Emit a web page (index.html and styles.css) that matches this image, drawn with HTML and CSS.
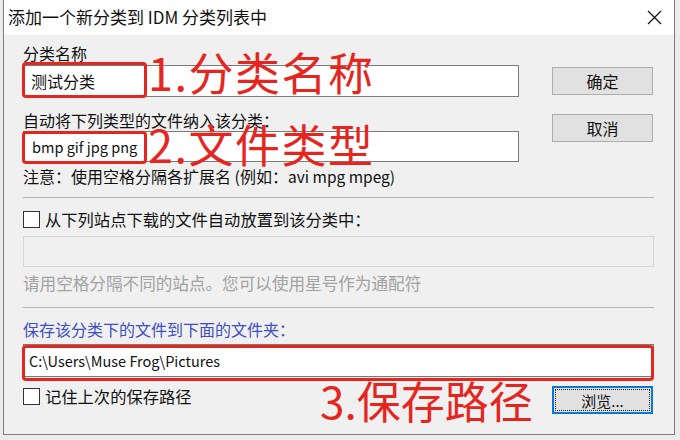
FILE: index.html
```html
<!DOCTYPE html>
<html lang="zh-CN">
<head>
<meta charset="utf-8">
<title>添加一个新分类到 IDM 分类列表中</title>
<link rel="stylesheet" href="styles.css">
</head>
<body>
<div class="screen">
  <div class="window">
    <div class="titlebar">
      <span class="title">添加一个新分类到 IDM 分类列表中</span>
      <svg class="close" width="15" height="15" viewBox="0 0 15 15"><path d="M1 1L14 14M14 1L1 14" stroke="#111" stroke-width="1.2" fill="none"/></svg>
    </div>
    <div class="body">
      <div class="top">
        <div class="fields">
          <div class="label l1">分类名称</div>
          <div class="input i1">测试分类</div>
          <div class="label l2">自动将下列类型的文件纳入该分类：</div>
          <div class="input i2">bmp gif jpg png</div>
          <div class="note">注意：使用空格分隔各扩展名 (例如：<span class="latin">avi mpg mpeg)</span></div>
        </div>
        <div class="buttons">
          <div class="btn">确定</div>
          <div class="btn cancel">取消</div>
        </div>
      </div>
      <div class="sep s1"></div>
      <div class="check c1"><span class="box"></span>从下列站点下载的文件自动放置到该分类中：</div>
      <div class="input disabled"></div>
      <div class="hint">请用空格分隔不同的站点。您可以使用星号作为通配符</div>
      <div class="sep s2"></div>
      <div class="label blue">保存该分类下的文件到下面的文件夹：</div>
      <div class="input path">C:\Users\Muse Frog\Pictures</div>
      <div class="bottom">
        <div class="check c2"><span class="box"></span>记住上次的保存路径</div>
        <div class="btn focus"><span class="focus-ring">浏览...</span></div>
      </div>
    </div>
    <div class="mark m1"></div>
    <div class="mark m2"></div>
    <div class="mark m3"></div>
    <div class="note-red r1">1.分类名称</div>
    <div class="note-red r2">2.文件类型</div>
    <div class="note-red r3">3.保存路径</div>
  </div>
</div>
</body>
</html>
```
FILE: styles.css
```css
* { box-sizing: border-box; }
html, body { margin: 0; padding: 0; }
body {
  font-family: "Noto Sans CJK SC", "Noto Sans", sans-serif;
  color: #111;
  background: #ececec;
}
.screen {
  width: 680px;
  height: 440px;
  padding-left: 3px;
  background: #ececec;
  overflow: hidden;
}
.window {
  position: relative;
  width: 672px;
  height: 435px;
  background: #f0f0f0;
  border-left: 1px solid #7d7d7d;
  border-right: 1px solid #7d7d7d;
  border-bottom: 1px solid #7d7d7d;
}
.titlebar {
  height: 35px;
  background: #fff;
  display: flex;
  align-items: center;
  justify-content: space-between;
  padding: 0 12px 2px 4px;
}
.title {
  font-size: 17px;
  line-height: 20px;
  color: #111;
}
.close { display: block; margin-top: 2px; }
.body {
  padding: 8px 20px 0 19px;
}
.top {
  display: flex;
  justify-content: space-between;
}
.fields { width: 496px; }
.label {
  font-size: 16px;
  line-height: 20px;
  height: 20px;
  white-space: nowrap;
}
.input {
  background: #fff;
  border: 1px solid #7a7a7a;
  display: flex;
  align-items: center;
  padding: 0 7px;
  font-size: 15px;
  white-space: nowrap;
}
.i1 { margin-top: 2px; height: 32px; font-size: 16px; }
.l2 {
  margin-top: 15px;
  line-height: 16px;
  height: 16px;
  margin-bottom: 2px;
}
.i2 { margin-top: 3px; height: 31px; padding-left: 8px; font-size: 14.5px; }
.note {
  margin-top: 4px;
  font-size: 16px;
  line-height: 20px;
  height: 20px;
  white-space: nowrap;
}
.latin { font-size: 15.5px; }
.buttons {
  width: 101px;
  margin-right: 1px;
  padding-top: 24px;
}
.btn {
  width: 101px;
  height: 28px;
  background: #e1e1e1;
  border: 1px solid #adadad;
  display: flex;
  align-items: center;
  justify-content: center;
  font-size: 16px;
  color: #111;
}
.cancel { margin-top: 19px; }
.sep {
  height: 1px;
  background: #b4b4b4;
}
.s1 { margin-top: 11px; }
.s2 { margin-top: 14px; }
.check {
  display: flex;
  align-items: center;
  font-size: 16.3px;
  line-height: 20px;
  height: 20px;
  white-space: nowrap;
}
.c1 { margin-top: 11px; }
.box {
  width: 17px;
  height: 17px;
  border: 1px solid #333;
  background: #fff;
  margin-right: 5px;
  flex: none;
}
.disabled {
  margin-top: 7px;
  height: 31px;
  background: #f0f0f0;
  border-color: #d4d4d4;
}
.hint {
  margin-top: 6px;
  font-size: 16.6px;
  line-height: 20px;
  height: 20px;
  color: #a2a2a2;
  white-space: nowrap;
}
.blue {
  margin-top: 11px;
  color: #3d4fc2;
}
.path {
  margin-top: 5px;
  height: 33px;
  padding-left: 5px;
  font-size: 14.5px;
}
.bottom {
  margin-top: 9px;
  display: flex;
  justify-content: space-between;
  align-items: flex-start;
}
.focus {
  margin-right: 1px;
  border: 2px solid #0a78d4;
  padding: 1px;
}
.focus-ring {
  display: flex;
  align-items: center;
  justify-content: center;
  width: 100%;
  height: 100%;
  border: 1px dotted #222;
  font-size: 15px;
}
.mark {
  position: absolute;
  border: 3px solid #e5261f;
  border-radius: 4px;
}
.m1 { left: 18px; top: 62px; width: 125px; height: 36px; }
.m2 { left: 18px; top: 131px; width: 125px; height: 33px; }
.m3 { left: 18px; top: 345px; width: 632px; height: 36px; }
.note-red {
  position: absolute;
  font-size: 45px;
  line-height: 34px;
  font-weight: 400;
  color: #e5261f;
  white-space: nowrap;
}
.r1 { left: 144px; top: 55px; letter-spacing: 1.5px; }
.r2 { left: 144px; top: 127px; letter-spacing: 1.5px; }
.r3 { left: 316px; top: 383px; font-size: 44px; }
```
